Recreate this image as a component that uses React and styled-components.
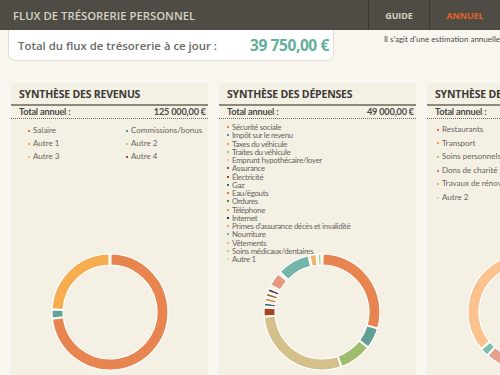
import styled, { createGlobalStyle } from 'styled-components';

const GlobalStyle = createGlobalStyle`
  html, body {
    margin: 0;
    padding: 0;
    background: #f9f6ef;
    overflow: hidden;
  }
  body {
    width: 500px;
    height: 375px;
    font-family: "Open Sans", sans-serif;
  }
`

const Page = styled.div`
  width: 500px;
  height: 375px;
  overflow: hidden;
  background: #f9f6ef;
`
const TopBar = styled.div`
  height: 30px;
  background: #4e4c44;
  display: flex;
  align-items: center;
`
const AppTitle = styled.div`
  flex: 1;
  padding-left: 13px;
  color: #d6d2c6;
  font-size: 11.3px;
  font-weight: 600;
`
const NavItem = styled.div`
  height: 30px;
  width: ${p => p.w}px;
  border-left: 1px solid #3a3832;
  display: flex;
  align-items: center;
  justify-content: center;
  font-size: 9px;
  font-weight: 700;
  letter-spacing: -0.1px;
  color: ${p => (p.active ? '#e5622a' : '#d6d2c6')};
`
const SummaryRow = styled.div`
  display: flex;
  align-items: flex-start;
  height: 53px;
`
const TotalCard = styled.div`
  margin-left: 8px;
  width: 332px;
  height: 31px;
  background: #fff;
  border: 1px solid #e2ded4;
  border-top: none;
  border-radius: 0 0 7px 7px;
  display: flex;
  align-items: center;
  justify-content: space-between;
  padding: 0 4px 0 9px;
  box-sizing: border-box;
  white-space: nowrap;
`
const TotalLabel = styled.span`
  color: #6a6a66;
  font-size: 11.4px;
  font-weight: 600;
`
const TotalValue = styled.span`
  color: #64ae9c;
  font-size: 15.5px;
  font-weight: 700;
  letter-spacing: -0.4px;
`
const Note = styled.div`
  margin-left: 50px;
  margin-top: 4px;
  font-family: "Lato", sans-serif;
  font-size: 8px;
  color: #4a4a46;
  white-space: nowrap;
`
const Panels = styled.div`
  display: flex;
  gap: 11px;
  padding-left: 11px;
`
const Panel = styled.div`
  flex: 0 0 197px;
  height: 292px;
  background: #f5f0e4;
  display: flex;
  flex-direction: column;
`
const PanelTitle = styled.div`
  padding: 4px 8px 0;
  height: 17px;
  font-size: 10.5px;
  font-weight: 700;
  letter-spacing: -0.2px;
  color: #3a3a36;
  border-bottom: 2px solid #8c887c;
  white-space: nowrap;
`
const TotalLine = styled.div`
  display: flex;
  justify-content: space-between;
  padding: 0 2px 0 8px;
  height: 12px;
  line-height: 12px;
  font-family: "Lato", sans-serif;
  font-size: 9.2px;
  font-weight: 700;
  letter-spacing: -0.2px;
  color: #4a4a46;
  border-bottom: 1px dotted #6e6b64;
  white-space: nowrap;
`
const ListArea = styled.div`
  height: 132px;
  padding: ${p => p.pad};
  box-sizing: border-box;
  display: grid;
  grid-template-columns: ${p => p.cols};
  grid-auto-rows: ${p => p.row}px;
`
const Item = styled.div`
  display: flex;
  align-items: center;
  gap: 3px;
  font-family: "Lato", sans-serif;
  font-size: ${p => p.size}px;
  letter-spacing: ${p => p.ls || 0}px;
  line-height: ${p => p.lh}px;
  color: #66645e;
  white-space: nowrap;
`
const Bullet = styled.span`
  width: 2px;
  height: 2px;
  background: ${p => p.c};
  flex: 0 0 2px;
`
const ChartArea = styled.div`
  display: flex;
  justify-content: center;
  padding-left: ${p => p.shift}px;
`

const polar = (cx, cy, r, deg) => {
  const a = (deg - 90) * Math.PI / 180
  return [cx + r * Math.cos(a), cy + r * Math.sin(a)]
}

const arcPath = (cx, cy, r0, r1, a0, a1) => {
  const [x0, y0] = polar(cx, cy, r1, a0)
  const [x1, y1] = polar(cx, cy, r1, a1)
  const [x2, y2] = polar(cx, cy, r0, a1)
  const [x3, y3] = polar(cx, cy, r0, a0)
  const large = a1 - a0 > 180 ? 1 : 0
  return `M${x0} ${y0} A${r1} ${r1} 0 ${large} 1 ${x1} ${y1} L${x2} ${y2} A${r0} ${r0} 0 ${large} 0 ${x3} ${y3} Z`
}

const Donut = ({ segs }) => (
  <svg width="122" height="122" viewBox="0 0 122 122">
    {segs.map((s, i) => (
      <path key={i} d={arcPath(61, 61, 47, 58, s[0], s[1])} fill={s[2]} stroke="#ffffff" strokeWidth="1.2" />
    ))}
  </svg>
)

const revenus = [
  ['Salaire', '#e8744a'], ['Commissions/bonus', '#4fa08f'],
  ['Autre 1', '#f2a341'], ['Autre 2', '#b7cf7d'],
  ['Autre 3', '#efc27a'], ['Autre 4', '#9c4a5e'],
]

const depenses = [
  ['Sécurité sociale', '#e8844f'], ['Impôt sur le revenu', '#4f9a8c'],
  ['Taxes du véhicule', '#f6a33d'], ['Traites du véhicule', '#a8c278'],
  ['Emprunt hypothécaire/loyer', '#f0c27c'], ['Assurance', '#8a4a6a'],
  ['Électricité', '#b33a1a'], ['Gaz', '#2f6f70'], ['Eau/égouts', '#d8802a'],
  ['Ordures', '#6f7a2e'], ['Téléphone', '#c8a040'], ['Internet', '#3a3048'],
  ["Primes d'assurance décès et invalidité", '#f0a080'], ['Nourriture', '#68b3a5'],
  ['Vêtements', '#f8b56e'], ['Soins médicaux/dentaires', '#b9d08a'], ['Autre 1', '#e8d6a8'],
]

const autres = [
  ['Restaurants', '#e8744a'], ['Transport', '#f2a341'], ['Soins personnels', '#c9c47a'],
  ['Dons de charité', '#e0707a'], ['Travaux de rénovation', '#f5b070'], ['Autre 2', '#e8d6a8'],
]

const revSegs = [
  [1, 263, '#e8844f'],
  [264, 272, '#5fa397'],
  [273, 359, '#f6ad50'],
]

const depSegs = [
  [1, 106, '#e8844f'],
  [107, 127, '#5f9f94'],
  [128, 160, '#9fbb6c'],
  [161, 265, '#d5bf8a'],
  [266, 274, '#a8421f'],
  [276, 279, '#3e6e6c'],
  [281, 284, '#d9822b'],
  [286, 289, '#8a6d2e'],
  [291, 294, '#4a3048'],
  [298, 311, '#e59a80'],
  [314, 346, '#74b5aa'],
  [348, 354, '#f7b26a'],
  [356, 359, '#b5cf90'],
]

const autSegs = [
  [150, 192, '#e8844f'],
  [193, 205, '#7b4b67'],
  [206, 221, '#e6a08e'],
  [222, 230, '#7fbfb0'],
  [231, 509, '#fbc28e'],
]

const App = () => {
  return (
    <Page>
      <GlobalStyle />
      <TopBar>
        <AppTitle>FLUX DE TRÉSORERIE PERSONNEL</AppTitle>
        <NavItem w={60}>GUIDE</NavItem>
        <NavItem w={70} active>ANNUEL</NavItem>
      </TopBar>
      <SummaryRow>
        <TotalCard>
          <TotalLabel>Total du flux de trésorerie à ce jour :</TotalLabel>
          <TotalValue>39 750,00 €</TotalValue>
        </TotalCard>
        <Note>Il s’agit d’une estimation annuelle</Note>
      </SummaryRow>
      <Panels>
        <Panel>
          <PanelTitle>SYNTHÈSE DES REVENUS</PanelTitle>
          <TotalLine><span>Total annuel :</span><span>125 000,00 €</span></TotalLine>
          <ListArea pad="5px 0 0 17px" cols="98px 1fr" row={13}>
            {revenus.map(([t, c]) => (
              <Item key={t} size={8} lh={13}><Bullet c={c} />{t}</Item>
            ))}
          </ListArea>
          <ChartArea shift={0}><Donut segs={revSegs} /></ChartArea>
        </Panel>
        <Panel>
          <PanelTitle>SYNTHÈSE DES DÉPENSES</PanelTitle>
          <TotalLine><span>Total annuel :</span><span>49 000,00 €</span></TotalLine>
          <ListArea pad="4px 0 0 8px" cols="1fr" row={8.25}>
            {depenses.map(([t, c]) => (
              <Item key={t} size={7.9} ls={-0.3} lh={8.25}><Bullet c={c} />{t}</Item>
            ))}
          </ListArea>
          <ChartArea shift={8}><Donut segs={depSegs} /></ChartArea>
        </Panel>
        <Panel>
          <PanelTitle>SYNTHÈSE DES AUTRES DÉPENSES</PanelTitle>
          <TotalLine><span>Total annuel :</span><span>18 000,00 €</span></TotalLine>
          <ListArea pad="4px 0 0 10px" cols="1fr" row={13.6}>
            {autres.map(([t, c]) => (
              <Item key={t} size={8} lh={13.6}><Bullet c={c} />{t}</Item>
            ))}
          </ListArea>
          <ChartArea shift={0}><Donut segs={autSegs} /></ChartArea>
        </Panel>
      </Panels>
    </Page>
  )
}

export default App
